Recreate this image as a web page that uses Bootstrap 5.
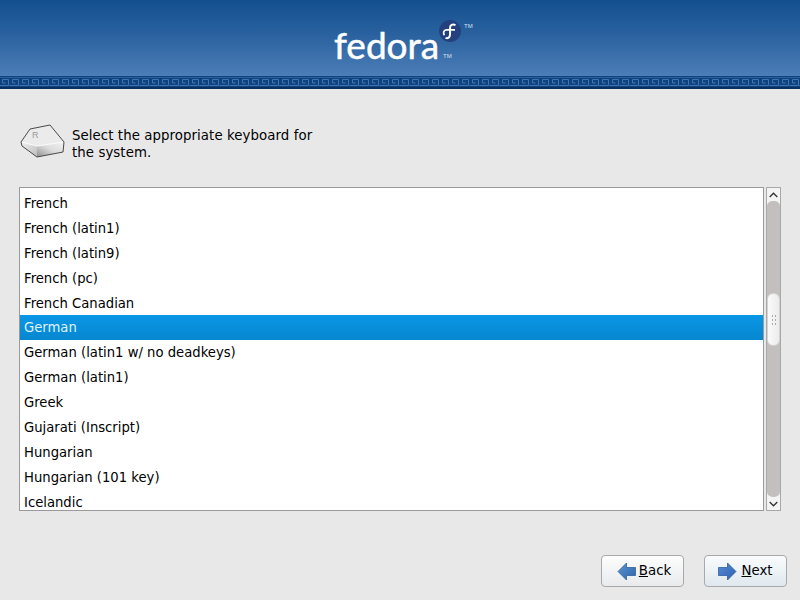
<!DOCTYPE html>
<html lang="en">
<head>
  <meta charset="UTF-8">
  <title>Fedora - Keyboard Selection</title>
  <link href="https://cdn.jsdelivr.net/npm/bootstrap@5.3.0/dist/css/bootstrap.min.css" rel="stylesheet">
  <style>
    html, body { height: 600px; overflow: hidden; }
    body { background: #e9e8e9; font-family: "DejaVu Sans", sans-serif; font-size: 13.33px; color: #000; }
    .top-banner { height: 89px; background: linear-gradient(#134f8f 0, #2a629f 35px, #4c7eb8 76px); }
    .logo-box { height: 76px; padding-left: 334px; padding-top: 24px; }
    .logo-word { font-family: "Lato", sans-serif; font-size: 37px; line-height: 42px; color: #fff; -webkit-text-stroke: .5px #fff; }
    .logo-tm { font-family: "Liberation Sans", sans-serif; font-size: 6px; fill: #d5e2f0; }
    .logo-mark { margin-left: -3px; margin-top: -6px; overflow: visible; }
    .key-band { display: block; height: 13px; width: 100%; }
    .prompt { padding: 35px 0 0 20px; height: 98px; line-height: 17px; }
    .prompt-text { margin-left: 7px; margin-top: 3px; letter-spacing: .07px; }
    .picker { height: 324px; padding: 0 19px 0 19px; }
    .kb-list { width: 745px; height: 324px; background: #fff; border: 1px solid #9a9a9a; overflow: hidden; padding-top: 3px; }
    .kb-list .list-group-item { height: 25px; padding: 0 4px; line-height: 25px; border: 0; border-radius: 0; font-size: 13.2px; color: #000; background: transparent; white-space: nowrap; }
    .kb-list .list-group-item.active { background: linear-gradient(#0a97e6, #0686d0); color: #dff1fb; }
    .scroll-col { width: 15px; margin-left: 2px; border: 1px solid #a8a8a8; background: #f4f4f4; }
    .scroll-arrow { height: 13px; }
    .scroll-trough { width: 13px; height: 296px; background: #c3bfbf; border-radius: 6px 6px 6px 6px / 5px; padding-top: 92px; }
    .scroll-thumb { height: 53px; background: linear-gradient(90deg, #fafafa, #ececec); border: 1px solid #d4d2d2; border-radius: 6px; }
    .grip { width: 6px; height: 11px; background: radial-gradient(circle, #aaa 0.8px, transparent 1px) 0 0 / 3px 4px; }
    .action-bar { padding: 44px 13px 0 0; gap: 20px; }
    .btn.nav-btn { width: 83px; height: 32px; padding: 0; font-size: 13.33px; color: #000; border: 1px solid #a9a9a9; border-radius: 4px; background: linear-gradient(#fdfdfd, #e8eaec); gap: 4px; }
    .btn.back-btn { padding-left: 3px; gap: 3px; }
    .btn.next-btn { background: linear-gradient(#fafcfd, #dfe8ee); }
  </style>
</head>
<body>

<div class="top-banner">
  <div class="logo-box d-flex align-items-start">
    <span class="logo-word">fedora</span>
    <svg class="logo-mark" width="40" height="26" viewBox="0 0 40 26">
      <circle cx="14" cy="13" r="11" fill="#24407f"/>
      <path d="M19.500 7.200c-3-1.400-5.500-.2-5.500 3v6.300c0 3-2.200 4.300-4.500 3.300" fill="none" stroke="#fff" stroke-width="2"/>
      <path d="M19 11.800h-8.500c-3 0-3.700 3.500-2 5.300" fill="none" stroke="#fff" stroke-width="1.700"/>
      <text class="logo-tm" x="28" y="10">TM</text>
      <text class="logo-tm" x="7" y="40">TM</text>
    </svg>
  </div>
  <svg class="key-band">
    <defs>
      <pattern id="keyPat" width="10" height="13" patternUnits="userSpaceOnUse">
        <rect width="10" height="13" fill="#0f437f"/>
        <rect y="11" width="10" height="2" fill="#06305f"/>
        <path d="M0 9.500h8.500v-6h-6v3.500h3" fill="none" stroke="#3f74b0" stroke-width="1"/>
        <path d="M8.500 9.500h1.500M0 1.500h10" fill="none" stroke="#2a5f9d" stroke-width="1"/>
      </pattern>
    </defs>
    <rect width="100%" height="13" fill="url(#keyPat)"/>
  </svg>
</div>

<div class="prompt d-flex align-items-start">
  <svg width="45" height="36" viewBox="0 0 45 36">
    <defs>
      <linearGradient id="keyFront" x1="0" y1="1" x2="1" y2="0"><stop offset="0" stop-color="#8f8f8f"/><stop offset=".5" stop-color="#dcdcdc"/><stop offset="1" stop-color="#f2f2f2"/></linearGradient>
      <linearGradient id="keySide" x1="0" y1="0" x2="1" y2="1"><stop offset="0" stop-color="#f0f0f0"/><stop offset="1" stop-color="#bdbdbd"/></linearGradient>
    </defs>
    <path d="M17 22 44 18 43 28 17 33z" fill="url(#keyFront)"/>
    <path d="M1 18 17 22 17 33 2 22z" fill="url(#keySide)"/>
    <path d="M1 18 10 5 30 1 44 18 17 22z" fill="#ebebeb"/>
    <path d="M1.500 18 17 22 44 18" fill="none" stroke="#fbfbfb" stroke-width="1"/>
    <path d="M1 18 10 5Q20 3 30 1L44 18 43 28 17 33 2 22z" fill="none" stroke="#4a4a4a" stroke-width="1" stroke-linejoin="round"/>
    <text x="12" y="14" font-family="Liberation Sans, sans-serif" font-size="9" fill="#9a9a9a">R</text>
  </svg>
  <div class="prompt-text">Select the appropriate keyboard for<br>the system.</div>
</div>

<div class="picker d-flex">
  <div class="kb-list">
    <ul class="list-group list-group-flush">
      <li class="list-group-item">French</li>
      <li class="list-group-item">French (latin1)</li>
      <li class="list-group-item">French (latin9)</li>
      <li class="list-group-item">French (pc)</li>
      <li class="list-group-item">French Canadian</li>
      <li class="list-group-item active">German</li>
      <li class="list-group-item">German (latin1 w/ no deadkeys)</li>
      <li class="list-group-item">German (latin1)</li>
      <li class="list-group-item">Greek</li>
      <li class="list-group-item">Gujarati (Inscript)</li>
      <li class="list-group-item">Hungarian</li>
      <li class="list-group-item">Hungarian (101 key)</li>
      <li class="list-group-item">Icelandic</li>
    </ul>
  </div>
  <div class="scroll-col d-flex flex-column">
    <div class="scroll-arrow d-flex justify-content-center align-items-center">
      <svg width="9" height="6" viewBox="0 0 9 6"><path d="M.7 5 4.500 1.200 8.300 5" fill="none" stroke="#333" stroke-width="1.300"/></svg>
    </div>
    <div class="scroll-trough">
      <div class="scroll-thumb d-flex justify-content-center align-items-center"><div class="grip"></div></div>
    </div>
    <div class="scroll-arrow flex-grow-1 d-flex justify-content-center align-items-center">
      <svg width="9" height="6" viewBox="0 0 9 6"><path d="M.7 1 4.500 4.800 8.300 1" fill="none" stroke="#333" stroke-width="1.300"/></svg>
    </div>
  </div>
</div>

<div class="action-bar d-flex justify-content-end">
  <button type="button" class="btn nav-btn back-btn d-flex align-items-center justify-content-center">
    <svg width="19" height="19" viewBox="0 0 19 19">
      <defs><linearGradient id="backFill" x1="0" y1="0" x2="1" y2="1"><stop offset="0" stop-color="#5c93cf"/><stop offset="1" stop-color="#2f66ad"/></linearGradient></defs>
      <path d="M1 9.500 9.500 1v4.500H18.500v8H9.500V18z" fill="url(#backFill)" stroke="#2f5f9c" stroke-width=".8"/>
    </svg>
    <span><u>B</u>ack</span>
  </button>
  <button type="button" class="btn nav-btn next-btn d-flex align-items-center justify-content-center">
    <svg width="19" height="19" viewBox="0 0 19 19">
      <defs><linearGradient id="nextFill" x1="0" y1="0" x2="1" y2="1"><stop offset="0" stop-color="#5a8cd8"/><stop offset="1" stop-color="#2c5fb0"/></linearGradient></defs>
      <path d="M18 9.500 9.500 1v4.500H.5v8h9V18z" fill="url(#nextFill)" stroke="#2f5f9c" stroke-width=".8"/>
    </svg>
    <span><u>N</u>ext</span>
  </button>
</div>

<script src="https://cdn.jsdelivr.net/npm/bootstrap@5.3.0/dist/js/bootstrap.bundle.min.js"></script>
</body>
</html>
